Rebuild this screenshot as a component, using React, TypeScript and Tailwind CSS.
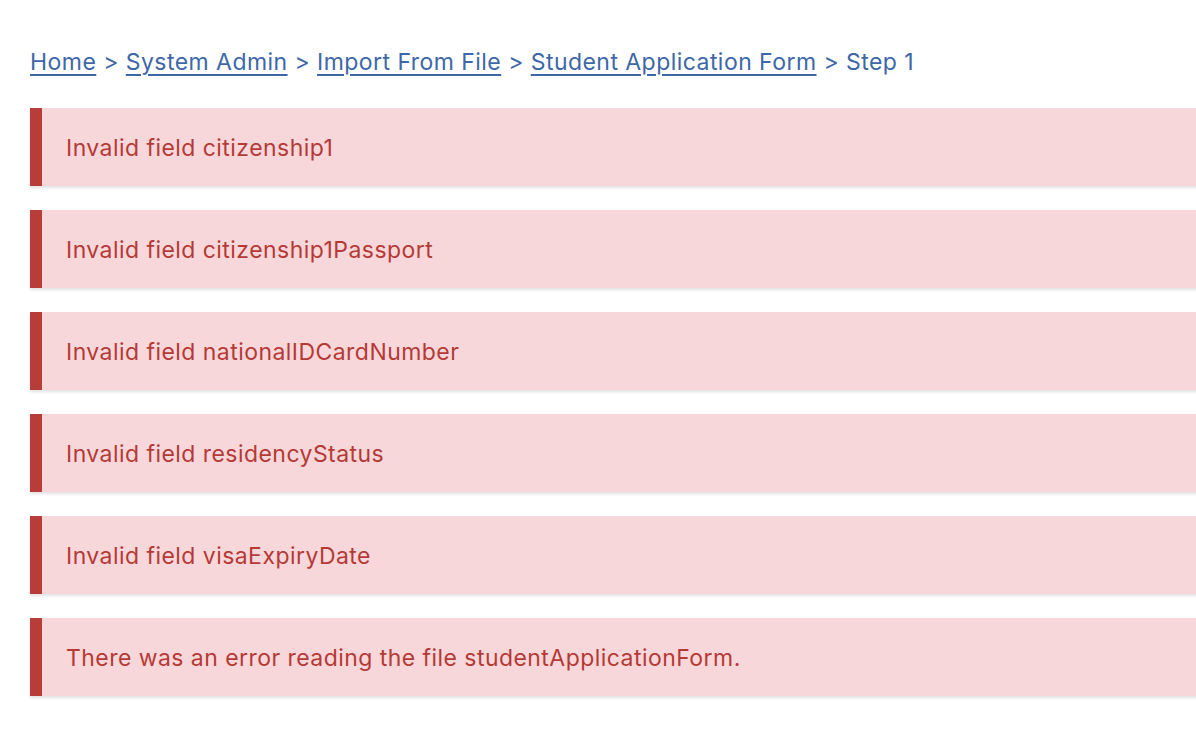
import React from 'react';

const crumbs = ['Home', 'System Admin', 'Import From File', 'Student Application Form'];

const errors = [
    'Invalid field citizenship1',
    'Invalid field citizenship1Passport',
    'Invalid field nationalIDCardNumber',
    'Invalid field residencyStatus',
    'Invalid field visaExpiryDate',
    'There was an error reading the file studentApplicationForm.',
];

const App: React.FC = () => {
    return (
        <div className="min-h-screen bg-white pl-[30px] pt-[46px] text-[23px] tracking-[0.45px] overflow-hidden" style={{ fontFamily: 'Inter, "Noto Sans", sans-serif' }}>
            {/* Breadcrumb */}
            <nav className="flex items-center h-[32px] text-[#3d67a8] leading-none whitespace-pre">
                {crumbs.map((c) => (
                    <React.Fragment key={c}>
                        <a href="#" className="underline underline-offset-[4px] decoration-[1.5px]">{c}</a>
                        <span> &gt; </span>
                    </React.Fragment>
                ))}
                <span>Step 1</span>
            </nav>

            {/* Error list */}
            <div className="mt-[30px] flex flex-col gap-[24px] w-[1200px]">
                {errors.map((e) => (
                    <div
                        key={e}
                        className="h-[78px] flex items-center pt-[2px] bg-[#f8d7da] border-l-[12px] border-[#b83c37] pl-[24px] text-[#b53a36] shadow-[0_2px_3px_rgba(0,0,0,0.12)]"
                    >
                        {e}
                    </div>
                ))}
            </div>
        </div>
    );
};

export default App;
